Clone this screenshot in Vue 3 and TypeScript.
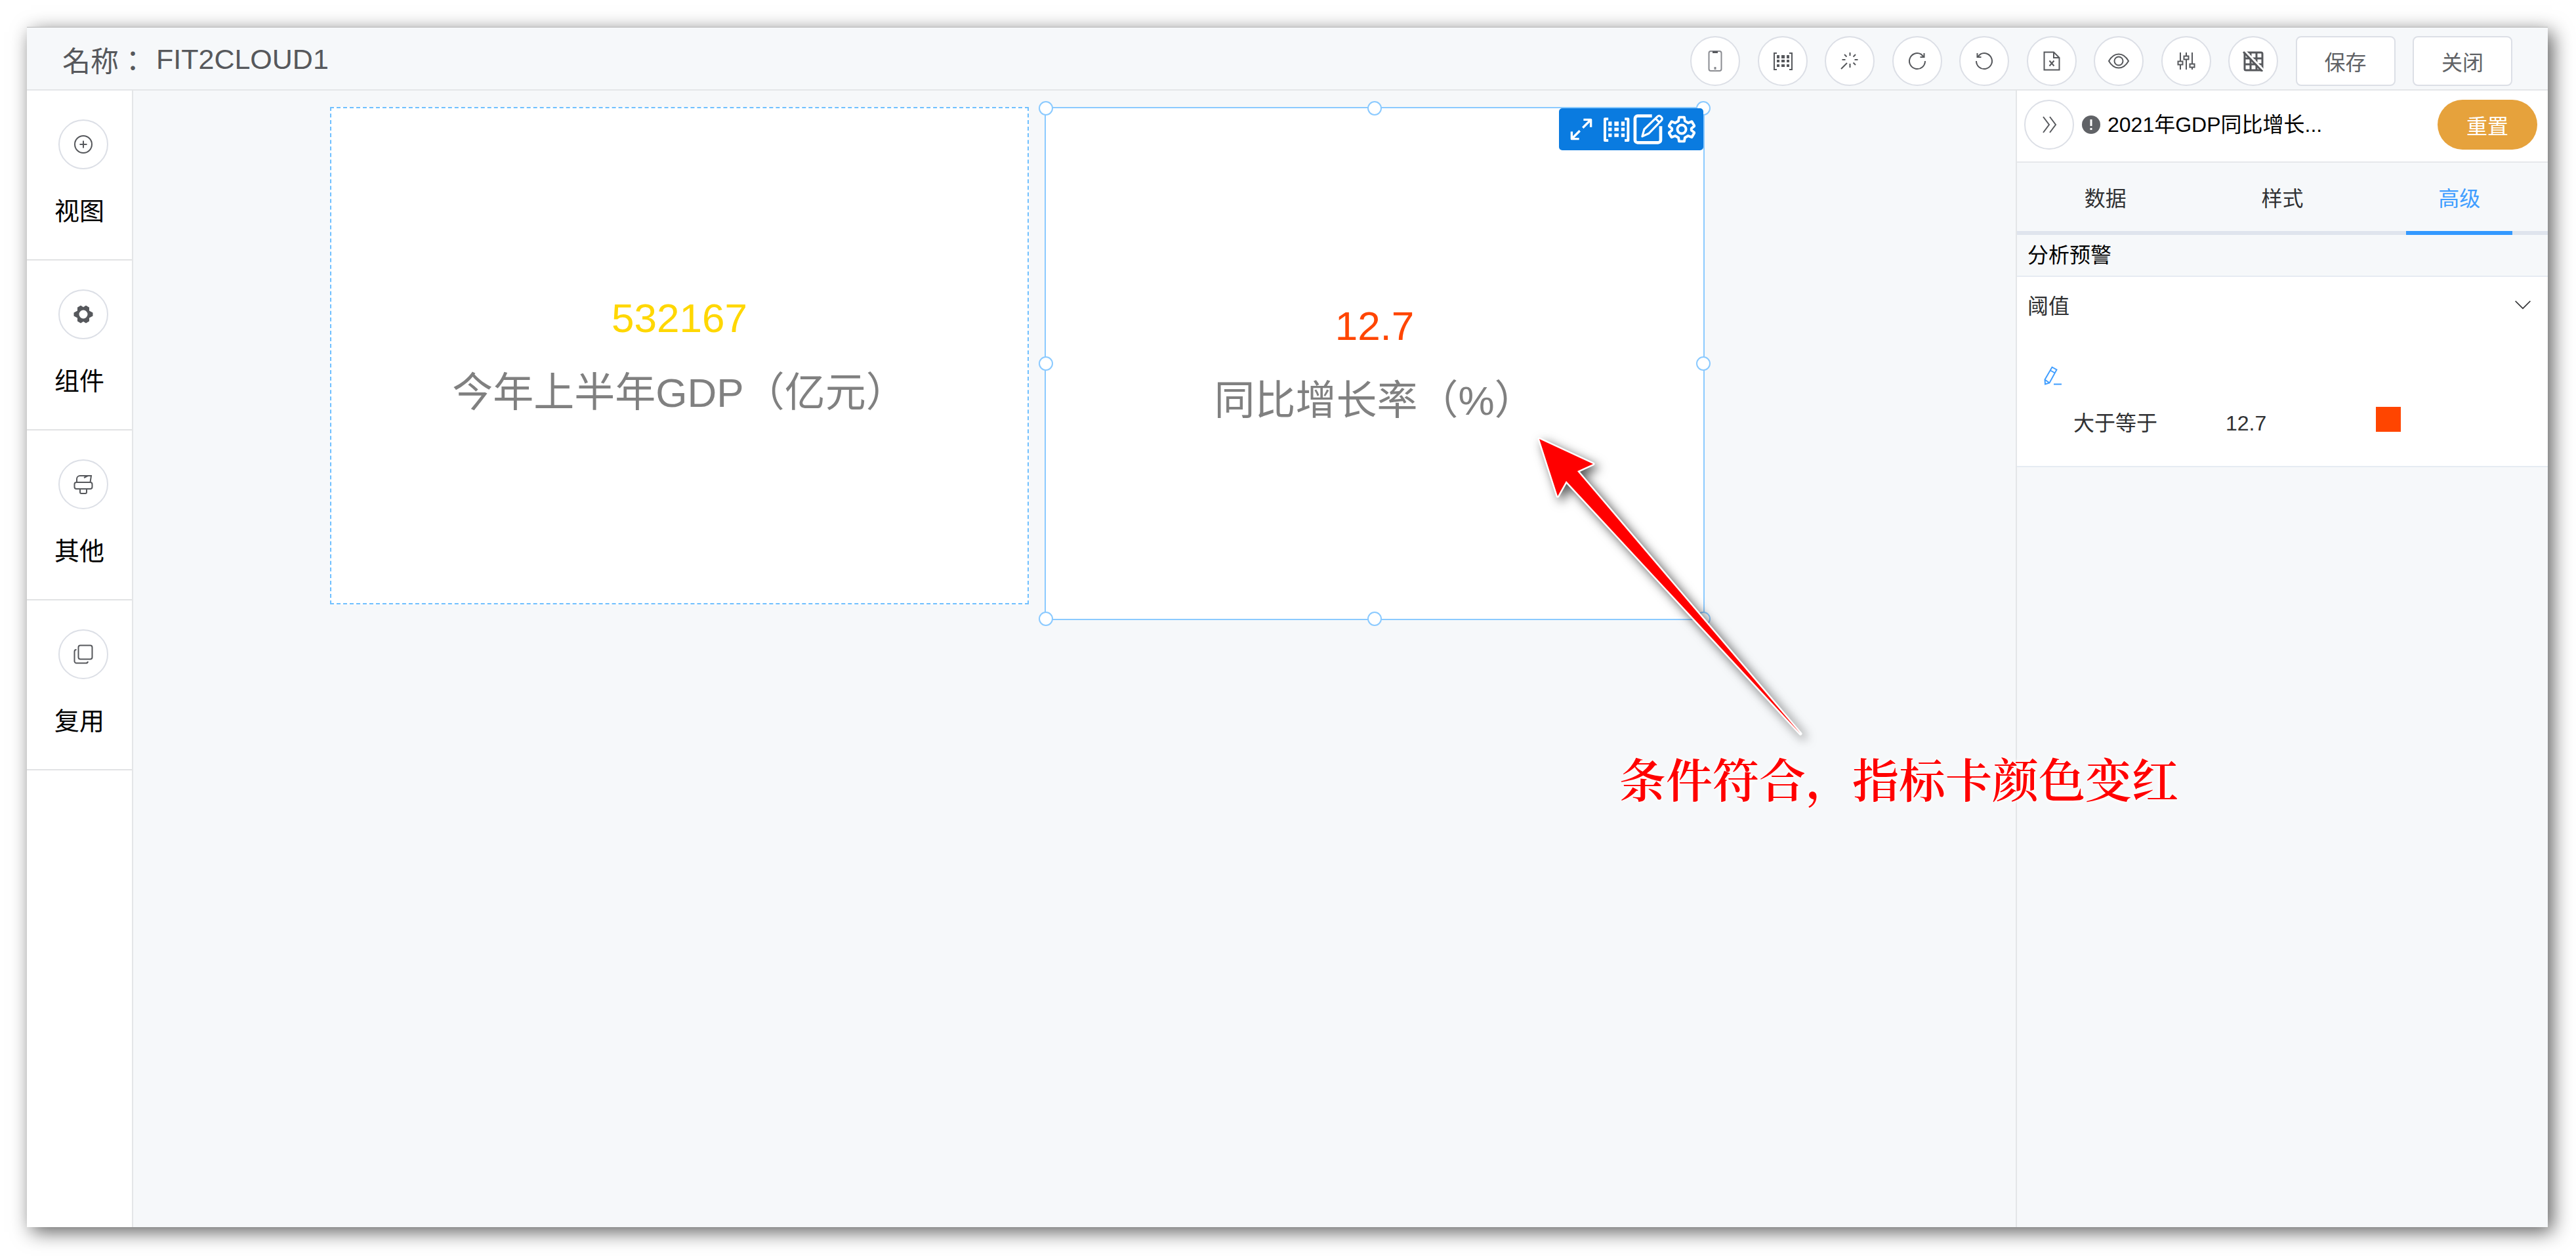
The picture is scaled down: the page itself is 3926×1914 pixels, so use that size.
<script setup lang="ts">
import { ref } from 'vue'

interface IconAction {
  label: string
  icon: string
}

// Inner SVG markup of each glyph, drawn on a 32 x 32 grid.
const glyphs: Record<string, string> = {
  phone:
    '<rect x="6.5" y="1" width="19" height="30" rx="3" stroke="#8a8c91"/><path d="M12 2.5h8" stroke-width="3"/><path d="M16 25v4" stroke="#8a8c91" stroke-width="3"/>',
  matrix:
    '<path d="M7 4H3v25h4M26 4h4v25h-4"/><g fill="currentColor" stroke="none"><path d="M7 7h4v5H7zM14 7h5v5h-5zM22 7h4v5h-4zM7 14h4v4H7zM14 14h5v4h-5zM22 14h4v4h-4zM7 21h4v4H7zM14 21h5v4h-5zM22 21h4v4h-4z"/></g>',
  wand:
    '<path d="M16.500 3v5M16.500 20v6M4.500 14h5M23.500 14h5M8 6l3.500 3.500M25 6l-3.500 3.500M21.500 18.500L25 22M12 19L3 28"/>',
  redo: '<path d="M28 16A12 12 0 1 1 21.500 5.400L26 9.500"/><path d="M26.500 4v6h-6"/>',
  undo: '<path d="M4 16A12 12 0 1 0 10.500 5.400L6 9.500"/><path d="M5.500 4v6h6"/>',
  sheet:
    '<path d="M4.500 2.500H19l8.500 8.500v18.500h-23z"/><path d="M19 3v8h8"/><path d="M12.500 15.500l7 8M19.500 15.500l-7 8"/>',
  eye: '<path d="M1 16C5 9 10 5.500 16 5.500S27 9 31 16c-4 7-9 10.500-15 10.500S5 23 1 16z"/><circle cx="16" cy="16" r="6.500"/>',
  sliders:
    '<path d="M7 3v13M7 22v7M16 3v5M16 14v15M25 3v17M25 26v3"/><path d="M3.500 16.500h7v5h-7zM12.500 8.500h7v5h-7zM21.500 20.500h7v5h-7z"/>',
  gridOff:
    '<rect x="3" y="3" width="27" height="27" rx="2" stroke-width="3"/><path d="M12 3v27M21 3v27M3 12h27M3 21h27" stroke-width="3"/><path d="M4 1l28 29" stroke="#fff" stroke-width="3"/><path d="M1 2l29 30" stroke-width="3"/>',
  plus: '<circle cx="16" cy="16" r="13"/><path d="M16 10.500v11M10.500 16h11"/>',
  gearSolid:
    '<path fill="currentColor" stroke="none" fill-rule="evenodd" d="M12 2.500l4 2.500 4-2.500 5 3v5l5.500 3v5L25 21.500v5l-5 3-4-2.500-4 2.500-5-3v-5l-5.500-3v-5L7 10.500v-5zM16 9.500a6.500 6.500 0 1 0 0 13 6.500 6.500 0 0 0 0-13z"/>',
  brush:
    '<path d="M6 13V8a5 5 0 0 1 5-5h17l-1.500 10"/><path d="M17 6l6-3"/><rect x="2.500" y="13" width="27" height="10" rx="3"/><path d="M11 23v5a2 2 0 0 0 2 2h6a2 2 0 0 0 2-2v-5"/>',
  copy: '<rect x="8.500" y="2.500" width="21" height="21" rx="3"/><path d="M5.500 9a3 3 0 0 0-3 3v14.500a3 3 0 0 0 3 3H20a3 3 0 0 0 3-2.500"/>',
  forward: '<path d="M7 4l9 12L7 28M17 4l9 12-9 12"/>',
  down: '<path d="M3 10l13 13 13-13"/>',
  pencil:
    '<path d="M15.500 3.500l7 4-11 20-6.500 2-.500-7zM13 8.500l7 4M4.500 22.500l7 5M18 29.500h12"/>',
  expand: '<path d="M19 3h10v10M28 4L18 14M13 29H3V19M4 28l10-10"/>',
  compose:
    '<path d="M19 3H5a2.500 2.500 0 0 0-2.500 2.500v21A2.500 2.500 0 0 0 5 29h20a2.500 2.500 0 0 0 2.500-2.500V13"/><path d="M9.500 23l2-7L24.500 3.500a2 2 0 0 1 3 0l.800.800a2 2 0 0 1 0 3L16 20z M22.500 5.500l4.500 4.500" stroke-width="2"/>',
  gear: '<path d="M13 2h6l.800 4.500 3.700 2.100 4.300-1.600 3 5.200-3.500 2.900v2l3.500 2.900-3 5.200-4.300-1.600-3.700 2.100L19 30h-6l-.800-4.300-3.700-2.100-4.300 1.600-3-5.200 3.500-2.900v-2L1.200 12.200l3-5.200 4.300 1.600 3.700-2.100z"/><circle cx="16" cy="16" r="5"/>',
}

const dashboardName = 'FIT2CLOUD1'

const toolbar: IconAction[] = [
  { label: '移动端布局', icon: 'phone' },
  { label: '矩阵设置', icon: 'matrix' },
  { label: '仪表板样式', icon: 'wand' },
  { label: '重做', icon: 'redo' },
  { label: '撤销', icon: 'undo' },
  { label: '导出', icon: 'sheet' },
  { label: '预览', icon: 'eye' },
  { label: '外部参数', icon: 'sliders' },
  { label: '隐藏网格', icon: 'gridOff' },
]

const sidebar: IconAction[] = [
  { label: '视图', icon: 'plus' },
  { label: '组件', icon: 'gearSolid' },
  { label: '其他', icon: 'brush' },
  { label: '复用', icon: 'copy' },
]

const cardTools: IconAction[] = [
  { label: '放大', icon: 'expand' },
  { label: '矩阵', icon: 'matrix' },
  { label: '编辑', icon: 'compose' },
  { label: '设置', icon: 'gear' },
]

const handles = ['nw', 'n', 'ne', 'w', 'e', 'sw', 's', 'se']

const tabs = ['数据', '样式', '高级']
const activeTab = ref('高级')
const expanded = ref(true)
</script>

<template>
  <div class="page">
    <div class="window">
      <header class="topbar">
        <h1 class="name"><span class="name-label">名称：</span><span>{{ dashboardName }}</span></h1>
        <div class="actions">
          <button v-for="a in toolbar" :key="a.icon" class="round" type="button" :aria-label="a.label">
            <svg class="icon" viewBox="0 0 32 32" v-html="glyphs[a.icon]"></svg>
          </button>
          <button class="plain" type="button">保存</button>
          <button class="plain" type="button">关闭</button>
        </div>
      </header>

      <div class="body">
        <nav class="sidebar">
          <div v-for="s in sidebar" :key="s.icon" class="entry">
            <button class="round" type="button" :aria-label="s.label">
              <svg class="icon" viewBox="0 0 32 32" v-html="glyphs[s.icon]"></svg>
            </button>
            <span>{{ s.label }}</span>
          </div>
        </nav>

        <main class="canvas">
          <section class="card total">
            <p class="value gold">532167</p>
            <p class="caption">今年上半年GDP（亿元）</p>
          </section>
          <section class="card growth">
            <p class="value alert">12.7</p>
            <p class="caption">同比增长率（%）</p>
            <i v-for="h in handles" :key="h" class="handle" :class="h"></i>
            <div class="card-tools">
              <button v-for="t in cardTools" :key="t.icon" type="button" :class="t.icon" :aria-label="t.label">
                <svg class="icon" viewBox="0 0 32 32" v-html="glyphs[t.icon]"></svg>
              </button>
            </div>
          </section>
        </main>

        <aside class="panel">
          <div class="panel-head">
            <button class="round" type="button" aria-label="收起">
              <svg class="icon" viewBox="0 0 32 32" v-html="glyphs.forward"></svg>
            </button>
            <svg class="info" viewBox="0 0 28 28">
              <circle cx="14" cy="14" r="14" fill="#606266" />
              <path d="M14 6v10M14 19v3" stroke="#fff" stroke-width="3" />
            </svg>
            <h2>2021年GDP同比增长...</h2>
            <button class="reset" type="button">重置</button>
          </div>
          <div class="tabs" role="tablist">
            <button
              v-for="t in tabs"
              :key="t"
              type="button"
              role="tab"
              :aria-selected="t === activeTab"
              :class="{ active: t === activeTab }"
              @click="activeTab = t"
            >
              <span>{{ t }}</span>
            </button>
          </div>
          <h3 class="group">分析预警</h3>
          <div class="threshold">
            <button class="fold" type="button" :aria-expanded="expanded" @click="expanded = !expanded">
              <span>阈值</span>
              <svg class="icon" viewBox="0 0 32 32" v-html="glyphs.down"></svg>
            </button>
            <div v-if="expanded" class="rules">
              <button class="edit" type="button" aria-label="编辑阈值">
                <svg class="icon" viewBox="0 0 32 32" v-html="glyphs.pencil"></svg>
              </button>
              <div class="rule">
                <span>大于等于</span>
                <span>12.7</span>
                <i class="swatch"></i>
              </div>
            </div>
          </div>
        </aside>
      </div>
    </div>

    <svg class="arrow" viewBox="0 0 440 490" aria-hidden="true">
      <path d="M26 29L108 67 84 78 424 478 67 93 54 116z" />
    </svg>
    <p class="note">条件符合，指标卡颜色变红</p>
  </div>
</template>

<style>
body {
  margin: 0;
  background: #fff;
}
</style>

<style scoped>
* {
  box-sizing: border-box;
}
.page {
  position: relative;
  display: flex;
  min-height: 100vh;
  padding: 42px 43px 44px 41px;
  font-family: 'Liberation Sans', 'Noto Sans CJK SC', sans-serif;
  font-size: 32px;
  color: #303133;
}
.window {
  flex: 1;
  display: flex;
  flex-direction: column;
  background: #f6f8fa;
  box-shadow:
    0 -1px 0 #b8b8b8,
    7px 7px 28px rgba(0, 0, 0, 0.64);
}
h1,
h2,
h3,
p {
  margin: 0;
  font-weight: 400;
}
button {
  padding: 0;
  border: 0;
  background: none;
  font: inherit;
  color: inherit;
}
.icon {
  display: block;
  width: 32px;
  height: 32px;
  fill: none;
  stroke: currentColor;
  stroke-width: 2;
}
.round {
  display: flex;
  flex: none;
  align-items: center;
  justify-content: center;
  width: 76px;
  height: 76px;
  border: 2px solid #dcdfe6;
  border-radius: 50%;
  background: #fff;
  color: #56585c;
}

/* Top bar */
.topbar {
  display: flex;
  align-items: center;
  justify-content: space-between;
  height: 96px;
  padding: 0 54px;
  border-bottom: 2px solid #e4e6e8;
}
.name {
  display: flex;
  gap: 14px;
  padding-top: 2px;
  font-size: 43px;
  line-height: 60px;
  color: #56585c;
}
.name-label {
  font-family: 'Noto Sans CJK TC', sans-serif;
}
.actions {
  display: flex;
  justify-content: space-between;
  width: 1253px;
  margin-top: 8px;
}
.plain {
  width: 152px;
  height: 76px;
  border: 2px solid #dcdfe6;
  border-radius: 8px;
  background: #fff;
  color: #606266;
}

.body {
  flex: 1;
  display: flex;
}

/* Left rail */
.sidebar {
  width: 162px;
  border-right: 2px solid #e4e6e8;
  background: #fff;
}
.entry {
  display: flex;
  flex-direction: column;
  align-items: center;
  gap: 38px;
  padding: 44px 0 47px;
  border-bottom: 2px solid #e1e2e4;
  font-size: 38px;
  line-height: 52px;
  color: #000;
}
.entry .round {
  margin-left: 12px;
}

/* Canvas */
.canvas {
  flex: 1;
  display: flex;
  align-items: flex-start;
  gap: 24px;
  padding: 25px 0 0 300px;
}
.card {
  position: relative;
  display: flex;
  flex: none;
  flex-direction: column;
  align-items: center;
  justify-content: center;
  gap: 4px;
  background: #fff;
  font-size: 62px;
  line-height: 110px;
}
.total {
  width: 1065px;
  height: 758px;
  border: 2px dashed #70c0ff;
}
.growth {
  width: 1006px;
  height: 782px;
  border: 2px solid #8bcaff;
}
.gold {
  color: #ffd700;
}
.alert {
  color: #ff4500;
}
.caption {
  color: #808080;
}
.handle {
  position: absolute;
  width: 22px;
  height: 22px;
  border: 2px solid #8bcaff;
  border-radius: 50%;
  background: #fff;
  transform: translate(-50%, -50%);
}
.nw,
.n,
.ne {
  top: 0;
}
.w,
.e {
  top: 50%;
}
.sw,
.s,
.se {
  top: 100%;
}
.nw,
.w,
.sw {
  left: 0;
}
.n,
.s {
  left: 50%;
}
.ne,
.e,
.se {
  left: 100%;
}
.card-tools {
  position: absolute;
  top: 0;
  right: 0;
  display: flex;
  align-items: center;
  justify-content: flex-end;
  gap: 4px;
  width: 220px;
  height: 64px;
  padding-right: 12px;
  border-radius: 5px;
  background: #0a7be0;
  color: #fff;
}
.card-tools .icon {
  width: 42px;
  height: 42px;
  stroke-width: 3;
  stroke-linejoin: round;
}
.card-tools .expand {
  width: 46px;
}
.card-tools .expand .icon {
  width: 36px;
  height: 36px;
}
.card-tools .compose .icon {
  width: 50px;
  height: 50px;
}

/* Settings panel */
.panel {
  width: 811px;
  border-left: 2px solid #e4e6e8;
}
.panel-head {
  display: flex;
  align-items: center;
  height: 110px;
  padding: 0 16px 4px 11px;
  border-bottom: 2px solid #e6e8eb;
  background: #fff;
  color: #000;
}
.panel-head h2 {
  font-size: 32px;
  line-height: 44px;
}
.info {
  width: 28px;
  height: 28px;
  margin: 0 11px 0 12px;
}
.reset {
  width: 152px;
  height: 76px;
  margin-left: auto;
  border-radius: 38px;
  background: #e6a23c;
  color: #fff;
}
.tabs {
  display: flex;
  height: 110px;
  border-bottom: 6px solid #dfe4ed;
}
.tabs button {
  flex: 1;
  padding: 0 54px;
}
.tabs span {
  display: block;
  height: 110px;
  line-height: 110px;
}
.tabs .active {
  color: #409eff;
}
.tabs .active span {
  border-bottom: 6px solid #3399ff;
}
.group {
  padding: 0 16px;
  border-bottom: 2px solid #e6ebf2;
  font-size: 32px;
  line-height: 62px;
  color: #000;
}
.threshold {
  border-bottom: 2px solid #e6ebf2;
  background: #fff;
}
.fold {
  display: flex;
  align-items: center;
  justify-content: space-between;
  width: 100%;
  height: 84px;
  padding: 0 24px 0 16px;
}
.fold .icon {
  width: 28px;
  height: 28px;
}
.rules {
  padding: 50px 0 46px 38px;
}
.edit {
  display: block;
  color: #409eff;
}
.rule {
  display: grid;
  grid-template-columns: 232px 229px auto;
  height: 44px;
  margin: 32px 0 0 48px;
}
.rule span {
  align-self: end;
  line-height: 38px;
}
.swatch {
  width: 38px;
  height: 38px;
  background: #ff4500;
}

/* Annotation laid over the editor */
.arrow {
  position: absolute;
  top: 640px;
  left: 2320px;
  width: 440px;
  height: 490px;
  overflow: visible;
  fill: #f00;
  stroke: #fff;
  stroke-width: 5;
  stroke-linejoin: round;
  paint-order: stroke;
  filter: drop-shadow(6px 6px 8px rgba(0, 0, 0, 0.65));
}
.note {
  position: absolute;
  top: 1134px;
  left: 2468px;
  font-family: 'Noto Serif CJK SC', 'Noto Sans CJK SC', serif;
  font-size: 71px;
  font-weight: 600;
  line-height: 100px;
  white-space: nowrap;
  color: #f00;
  text-shadow:
    0 0 4px #fff,
    0 0 6px #fff,
    0 0 8px #fff;
}
</style>
